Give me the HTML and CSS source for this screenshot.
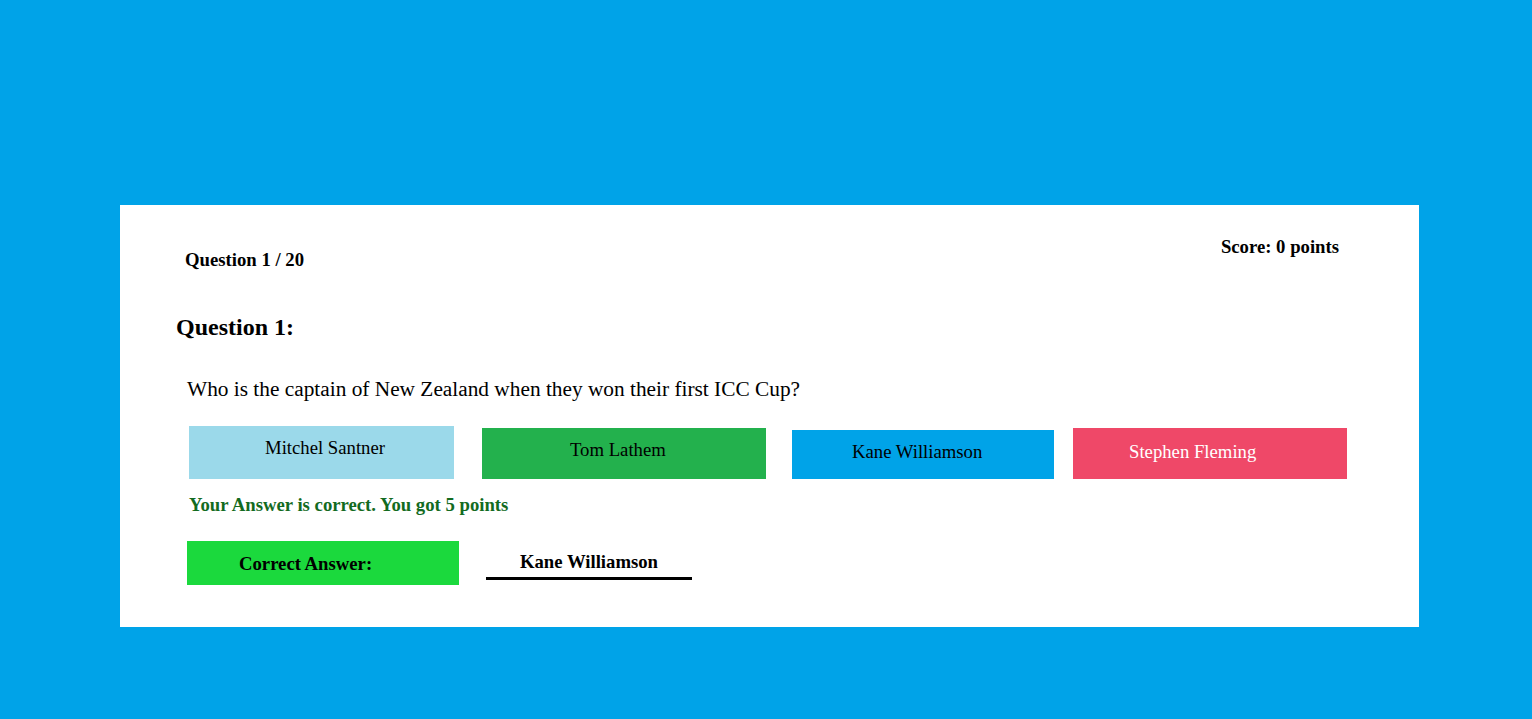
FILE: index.html
```html
<!DOCTYPE html>
<html>
<head>
<meta charset="utf-8">
<link rel="stylesheet" href="styles.css">
</head>
<body>
<div class="card">
  <div class="header">
    <div class="count">Question 1 / 20</div>
    <div class="score">Score: 0 points</div>
  </div>
  <h2 class="title">Question 1:</h2>
  <p class="question">Who is the captain of New Zealand when they won their first ICC Cup?</p>
  <div class="options">
    <div class="opt opt-1">Mitchel Santner</div>
    <div class="opt opt-2">Tom Lathem</div>
    <div class="opt opt-3">Kane Williamson</div>
    <div class="opt opt-4">Stephen Fleming</div>
  </div>
  <div class="feedback">Your Answer is correct. You got 5 points</div>
  <div class="result">
    <div class="result-label">Correct Answer:</div>
    <div class="result-value">Kane Williamson</div>
  </div>
</div>
</body>
</html>
```
FILE: styles.css
```css
html, body {
  margin: 0;
  padding: 0;
}
body {
  background: #00a3e8;
  font-family: "Liberation Serif", "Times New Roman", serif;
  color: #000;
  min-height: 719px;
  overflow: hidden;
}
.card {
  box-sizing: border-box;
  margin: 205px 0 0 120px;
  width: 1299px;
  height: 422px;
  background: #fff;
  padding-top: 32px;
}
.header {
  display: flex;
  justify-content: space-between;
  align-items: flex-start;
  padding: 0 80px 0 65px;
  font-weight: bold;
  font-size: 18.72px;
  line-height: 20px;
}
.count {
  margin-top: 13px;
}
.title {
  margin: 43px 0 0 56px;
  font-size: 24px;
  line-height: 28px;
  font-weight: bold;
}
.question {
  margin: 36px 0 0 67px;
  font-size: 21.33px;
  line-height: 24px;
}
.options {
  display: flex;
  align-items: flex-end;
  margin: 25px 0 0 69px;
}
.opt {
  box-sizing: border-box;
  font-size: 18.72px;
  line-height: 20px;
  padding-top: 12px;
}
.opt-1 {
  width: 265px;
  height: 53px;
  background: #9bd9ea;
  padding-left: 76px;
}
.opt-2 {
  width: 284px;
  height: 51px;
  margin-left: 28px;
  background: #23b14d;
  padding-left: 88px;
}
.opt-3 {
  width: 262px;
  height: 49px;
  margin-left: 26px;
  background: #00a3e8;
  padding-left: 60px;
}
.opt-4 {
  width: 274px;
  height: 51px;
  margin-left: 19px;
  background: #ef4868;
  color: #fff;
  padding-left: 56px;
  padding-top: 14px;
}
.feedback {
  margin: 16px 0 0 69px;
  font-size: 18.72px;
  line-height: 20px;
  font-weight: bold;
  color: #136b1f;
}
.result {
  display: flex;
  align-items: flex-start;
  margin: 26px 0 0 67px;
  font-size: 18.72px;
  line-height: 20px;
  font-weight: bold;
}
.result-label {
  box-sizing: border-box;
  width: 272px;
  height: 44px;
  background: #1bd93d;
  padding: 13px 0 0 52px;
}
.result-value {
  box-sizing: border-box;
  width: 206px;
  margin-left: 27px;
  padding-top: 11px;
  padding-bottom: 5px;
  border-bottom: 3px solid #000;
  text-align: center;
}
```
